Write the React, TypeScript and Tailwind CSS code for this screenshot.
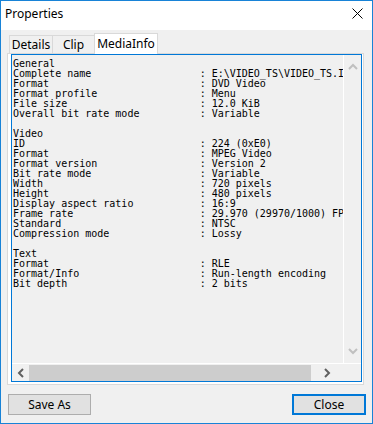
import React from "react";

const rows: [string, string?][] = [
  ["General"],
  ["Complete name", "E:\\VIDEO_TS\\VIDEO_TS.IFO"],
  ["Format", "DVD Video"],
  ["Format profile", "Menu"],
  ["File size", "12.0 KiB"],
  ["Overall bit rate mode", "Variable"],
  [""],
  ["Video"],
  ["ID", "224 (0xE0)"],
  ["Format", "MPEG Video"],
  ["Format version", "Version 2"],
  ["Bit rate mode", "Variable"],
  ["Width", "720 pixels"],
  ["Height", "480 pixels"],
  ["Display aspect ratio", "16:9"],
  ["Frame rate", "29.970 (29970/1000) FPS"],
  ["Standard", "NTSC"],
  ["Compression mode", "Lossy"],
  [""],
  ["Text"],
  ["Format", "RLE"],
  ["Format/Info", "Run-length encoding"],
  ["Bit depth", "2 bits"],
];

const report = rows
  .map(([label, value]) => (value === undefined ? label : label.padEnd(31) + ": " + value))
  .join("\n");

function Chevron({ dir, color }: { dir: "up" | "down" | "left" | "right"; color: string }) {
  const d = {
    up: "M1 6 L5 2 L9 6",
    down: "M1 2 L5 6 L9 2",
    left: "M6 1 L2 5 L6 9",
    right: "M2 1 L6 5 L2 9",
  }[dir];
  const horiz = dir === "up" || dir === "down";
  return (
    <svg width={horiz ? 10 : 8} height={horiz ? 8 : 10} viewBox={horiz ? "0 0 10 8" : "0 0 8 10"}>
      <path d={d} fill="none" stroke={color} strokeWidth="2" />
    </svg>
  );
}

export default function App() {
  return (
    <div className="w-[373px] h-[424px] border border-[#1883d7] bg-[#f0f0f0] flex flex-col font-['Noto_Sans',sans-serif] text-[12px] text-black">
      {/* title bar */}
      <div className="h-[29px] bg-white flex items-center justify-between pl-[4px] pr-[9px] shrink-0">
        <span className="leading-none -mt-[3px]">Properties</span>
        <svg width="11" height="11" viewBox="0 0 11 11" className="-mt-[4px]">
          <path d="M0.5 0.5 L10.5 10.5 M10.5 0.5 L0.5 10.5" stroke="#000" strokeWidth="1" />
        </svg>
      </div>

      <div className="flex flex-col pl-[6px] pr-[8px] pt-[3px]">
        {/* tabs */}
        <div className="flex items-end h-[20px] pl-[2px]">
          <div className="w-[44px] h-[18px] border border-b-0 border-[#d9d9d9] flex items-center justify-center">
            Details
          </div>
          <div className="w-[42px] h-[18px] border border-l-0 border-b-0 border-[#d9d9d9] flex items-center justify-center">
            Clip
          </div>
          <div className="relative z-10 -ml-px -mb-px w-[64px] h-[21px] border border-b-0 border-[#d9d9d9] bg-white flex items-center justify-center pb-[1px]">
            MediaInfo
          </div>
        </div>

        {/* panel */}
        <div className="h-[332px] border border-[#d9d9d9] bg-white pl-[3px] pr-[1px] pb-[2px]">
          <div className="h-full border border-[#0078d7] bg-[#f0f0f0] flex flex-col">
            <div className="flex flex-1 min-h-0">
              <pre className="flex-1 overflow-hidden whitespace-pre pl-[1px] pt-[4px] font-['DejaVu_Sans_Mono',monospace] text-[10px] leading-[10px] text-black">
                {report}
              </pre>
              <div className="w-[18px] border-l border-white flex flex-col items-center justify-between py-[8px]">
                <Chevron dir="up" color="#c0c0c0" />
                <Chevron dir="down" color="#c0c0c0" />
              </div>
            </div>
            <div className="h-[18px] border-t border-white flex">
              <div className="flex-1 flex items-center">
                <div className="w-[17px] flex justify-center">
                  <Chevron dir="left" color="#606060" />
                </div>
                <div className="w-[282px] h-[16px] bg-[#cdcdcd]" />
                <div className="flex-1 flex justify-center">
                  <Chevron dir="right" color="#606060" />
                </div>
              </div>
              <div className="w-[18px]" />
            </div>
          </div>
        </div>

        {/* buttons */}
        <div className="flex justify-between mt-[9px] pl-[1px] -mr-[2px]">
          <button className="w-[83px] h-[21px] border border-[#adadad] bg-[#e1e1e1] leading-none">
            Save As
          </button>
          <button className="w-[74px] h-[21px] border-2 border-[#0078d7] bg-[#e1e1e1] leading-none">
            Close
          </button>
        </div>
      </div>
    </div>
  );
}
